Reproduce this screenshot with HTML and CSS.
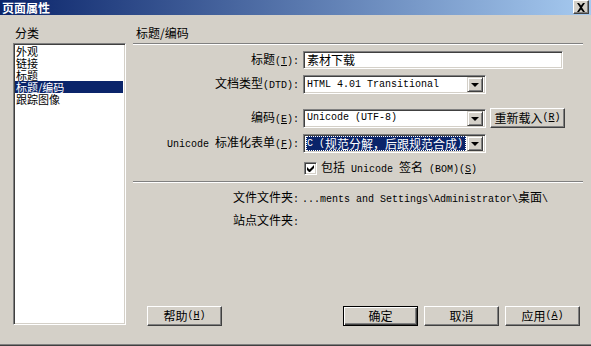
FILE: index.html
```html
<!DOCTYPE html>
<html lang="zh-CN">

<head>
    <meta charset="UTF-8">
    <title>页面属性</title>
    <link rel="stylesheet" href="styles.css">
</head>

<body>
    <div class="dialog">
        <div class="titlebar">
            <span class="title">页面属性</span>
            <span class="close-btn">
                <svg width="10" height="9" viewBox="0 0 10 9">
                    <path d="M1 0h2l2 2.5L7 0h2L6 4.5 9 9H7L5 6.5 3 9H1l3-4.5z" fill="#000"/>
                </svg>
            </span>
        </div>

        <div class="content">
            <div class="side">
                <div class="side-label">分类</div>
                <ul class="category-list">
                    <li>外观</li>
                    <li>链接</li>
                    <li>标题</li>
                    <li class="selected">标题/编码</li>
                    <li>跟踪图像</li>
                </ul>
            </div>

            <div class="panel">
                <div class="panel-heading">标题/编码</div>

                <div class="row row-title">
                    <label>标题<span class="lat">(<u>T</u>): </span></label>
                    <div class="field text-input wide">素材下载</div>
                </div>

                <div class="row row-dtd">
                    <label>文档类型<span class="lat">(DTD): </span></label>
                    <div class="field combo">
                        <span class="combo-text lat">HTML 4.01 Transitional</span>
                        <span class="combo-btn"><span class="arrow"></span></span>
                    </div>
                </div>

                <div class="row row-enc">
                    <label>编码<span class="lat">(<u>E</u>): </span></label>
                    <div class="field combo">
                        <span class="combo-text lat">Unicode (UTF-8)</span>
                        <span class="combo-btn"><span class="arrow"></span></span>
                    </div>
                    <span class="btn reload-btn">重新载入<span class="lat">(<u>R</u>)</span></span>
                </div>

                <div class="row row-norm">
                    <label><span class="lat">Unicode </span>标准化表单<span class="lat">(<u>F</u>): </span></label>
                    <div class="field combo">
                        <span class="combo-text focused"><span class="lat">C (</span>规范分解，后跟规范合成<span class="lat">)</span></span>
                        <span class="combo-btn"><span class="arrow"></span></span>
                    </div>
                </div>

                <div class="row row-check">
                    <span></span>
                    <div class="check-line">
                        <span class="checkbox">
                            <svg width="7" height="7" viewBox="0 0 7 7">
                                <path d="M0 2v3l2 2h1l4-4V0L2.5 4.5z" fill="#000"/>
                            </svg>
                        </span>
                        <span>包括<span class="lat"> Unicode </span>签名<span class="lat"> (BOM)(<u>S</u>)</span></span>
                    </div>
                </div>

                <div class="separator"></div>

                <div class="row info-row">
                    <label>文件文件夹<span class="lat">: </span></label>
                    <span class="info-value"><span class="lat">...ments and Settings\Administrator\</span>桌面<span class="lat">\</span></span>
                </div>
                <div class="row info-row">
                    <label>站点文件夹<span class="lat">: </span></label>
                    <span class="info-value"></span>
                </div>

                <div class="footer">
                    <span class="btn help-btn">帮助<span class="lat">(<u>H</u>)</span></span>
                    <div class="footer-right">
                        <span class="btn default-btn">确定</span>
                        <span class="btn">取消</span>
                        <span class="btn">应用<span class="lat">(<u>A</u>)</span></span>
                    </div>
                </div>
            </div>
        </div>
    </div>
</body>

</html>
```

FILE: styles.css
```css
body {
    margin: 0;
    font-family: "Noto Sans CJK SC", sans-serif;
    font-size: 12px;
    line-height: 12px;
    color: #000;
    background: #d4d0c8;
}

.lat {
    font-family: "Liberation Mono", "Noto Sans CJK SC", monospace;
    font-size: 10px;
}

.dialog {
    width: 591px;
    height: 346px;
    box-sizing: border-box;
    display: flex;
    flex-direction: column;
    background: #d4d0c8;
    border-bottom: 1px solid #404040;
    box-shadow: inset 0 -1px 0 #808080;
}

/* title bar */
.titlebar {
    height: 15px;
    display: flex;
    align-items: center;
    justify-content: space-between;
    background: linear-gradient(to right, #0a246a, #a6caf0);
    padding-left: 2px;
}

.title {
    color: #fff;
    font-weight: bold;
    font-size: 12px;
    line-height: 12px;
}

.close-btn {
    width: 14px;
    height: 12px;
    margin-right: 2px;
    margin-top: -1px;
    display: flex;
    align-items: center;
    justify-content: center;
    background: #d4d0c8;
    border: 1px solid;
    border-color: #fff #404040 #404040 #fff;
    box-shadow: inset -1px -1px 0 #808080;
}

/* content */
.content {
    flex: 1;
    display: flex;
    padding-left: 13px;
    padding-bottom: 1px;
}

.side {
    width: 113px;
    display: flex;
    flex-direction: column;
}

.side-label {
    padding: 12px 0 4px 2px;
}

.category-list {
    list-style: none;
    margin: 0;
    padding: 1px;
    height: 282px;
    box-sizing: border-box;
    background: #fff;
    border: 1px solid;
    border-color: #808080 #fff #fff #808080;
    box-shadow: inset 1px 1px 0 #404040, inset -1px -1px 0 #d4d0c8;
}

.category-list li {
    height: 12px;
    font-size: 11px;
    line-height: 12px;
    padding-left: 1px;
    margin-right: 1px;
}

.category-list li.selected {
    background: #0a246a;
    color: #fff;
}

/* right panel */
.panel {
    flex: 1;
    margin-left: 7px;
    margin-right: 8px;
    display: flex;
    flex-direction: column;
}

.panel-heading {
    padding: 12px 0 4px 3px;
    border-bottom: 1px solid #808080;
    box-shadow: 0 1px 0 #fff;
}

.row {
    display: flex;
    align-items: center;
}

.row label,
.row > span:first-child {
    width: 166px;
    text-align: right;
    margin-right: 4px;
    flex-shrink: 0;
}

.row-title {
    margin-top: 7px;
}

.row-dtd {
    margin-top: 6px;
}

.row-enc {
    margin-top: 14px;
}

.row-norm {
    margin-top: 6px;
}

.row-check {
    margin-top: 8px;
}

.field {
    box-sizing: border-box;
    height: 18px;
    background: #fff;
    border: 1px solid;
    border-color: #808080 #fff #fff #808080;
    box-shadow: inset 1px 1px 0 #404040, inset -1px -1px 0 #d4d0c8;
    display: flex;
    align-items: center;
}

.text-input {
    width: 260px;
    padding-left: 3px;
}

.combo {
    width: 183px;
    height: 19px;
    padding: 2px;
}

.combo-text {
    flex: 1;
    height: 15px;
    display: flex;
    align-items: center;
    padding-left: 1px;
    white-space: nowrap;
    overflow: hidden;
}

.combo-text.focused {
    background: #0a246a;
    color: #fff;
    outline: 1px dotted #fff;
    outline-offset: -1px;
    margin-right: 1px;
}

.combo-btn {
    box-sizing: border-box;
    width: 16px;
    height: 15px;
    display: flex;
    align-items: center;
    justify-content: center;
    background: #d4d0c8;
    border: 1px solid;
    border-color: #d4d0c8 #404040 #404040 #d4d0c8;
    box-shadow: inset 1px 1px 0 #fff, inset -1px -1px 0 #808080;
}

.arrow {
    width: 0;
    height: 0;
    border-left: 4px solid transparent;
    border-right: 4px solid transparent;
    border-top: 4px solid #000;
    margin-top: 1px;
}

/* buttons */
.btn {
    box-sizing: border-box;
    width: 75px;
    height: 20px;
    display: flex;
    align-items: center;
    justify-content: center;
    background: #d4d0c8;
    border: 1px solid;
    border-color: #fff #404040 #404040 #fff;
    box-shadow: inset -1px -1px 0 #808080;
}

.reload-btn {
    margin-left: 4px;
    width: 75px;
    height: 20px;
}

.default-btn {
    border: 1px solid #000;
    box-shadow: inset 1px 1px 0 #fff, inset -1px -1px 0 #404040, inset -2px -2px 0 #808080;
}

/* checkbox */
.check-line {
    display: flex;
    align-items: center;
    gap: 4px;
    margin-left: 1px;
}

.checkbox {
    box-sizing: border-box;
    width: 13px;
    height: 13px;
    display: flex;
    align-items: center;
    justify-content: center;
    background: #fff;
    border: 1px solid;
    border-color: #808080 #fff #fff #808080;
    box-shadow: inset 1px 1px 0 #404040, inset -1px -1px 0 #d4d0c8;
}

.separator {
    margin-top: 5px;
    border-top: 1px solid #808080;
    border-bottom: 1px solid #fff;
}

.info-row {
    margin-top: 8px;
}

.info-row + .info-row {
    margin-top: 8px;
}

.info-value {
    white-space: nowrap;
    margin-left: -1px;
}

/* footer */
.footer {
    margin-top: auto;
    margin-bottom: 18px;
    display: flex;
    justify-content: space-between;
    padding-left: 14px;
    padding-right: 3px;
}

.footer-right {
    display: flex;
    gap: 6px;
}
```
